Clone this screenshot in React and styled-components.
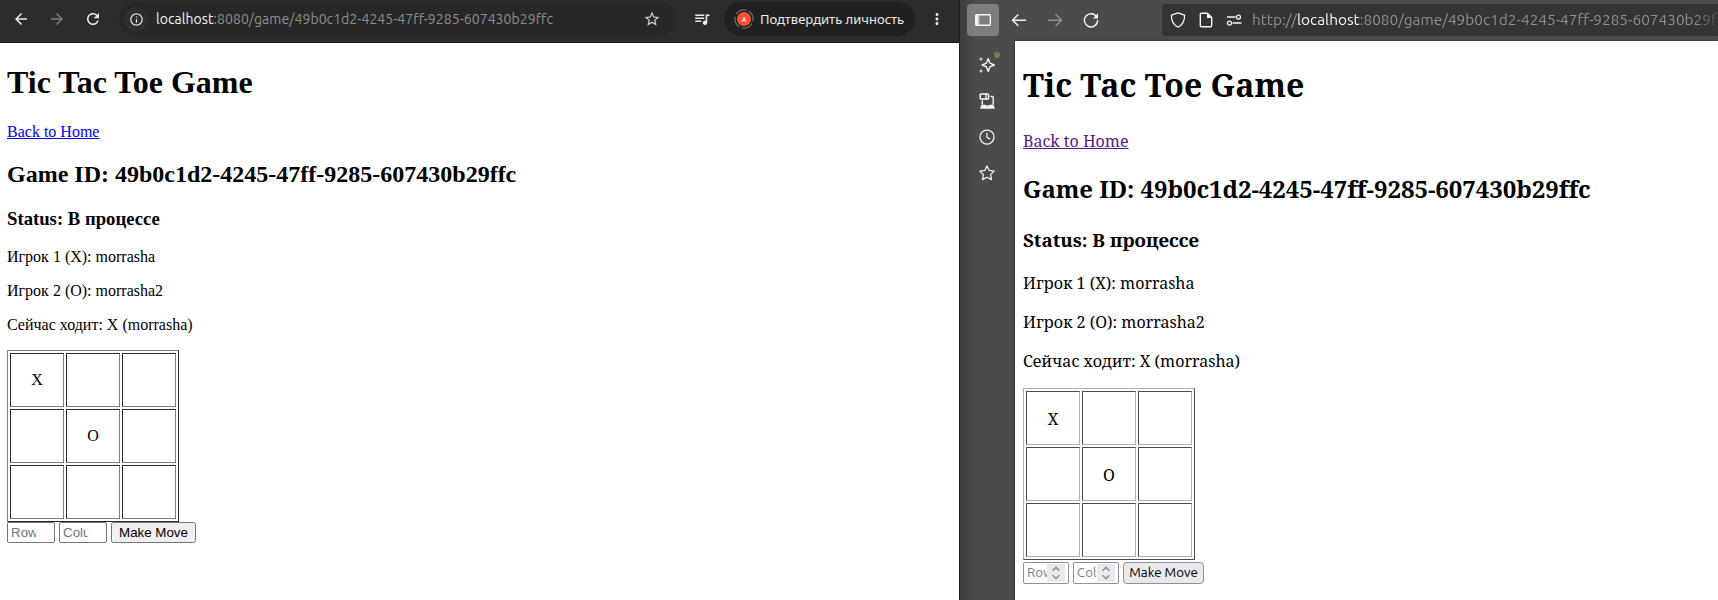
import React from 'react';
import styled, { createGlobalStyle } from 'styled-components';
import {
  MdArrowBack,
  MdArrowForward,
  MdRefresh,
  MdInfoOutline,
  MdStarBorder,
  MdQueueMusic,
  MdMoreVert,
} from 'react-icons/md';

const GAME_ID = '49b0c1d2-4245-47ff-9285-607430b29ffc';
const BOARD = [
  ['X', '', ''],
  ['', 'O', ''],
  ['', '', ''],
];
const UI_FONT = "Ubuntu, 'Noto Sans', sans-serif";

const GlobalStyle = createGlobalStyle`
  body { margin: 0; background: #fff; overflow: hidden; }
`;

const Desktop = styled.div`
  display: grid;
  grid-template-columns: 959px 759px;
  height: 600px;
  overflow: hidden;
  background: #fff;
  color: #000;
`;

/* ---------- Chromium window ---------- */

const ChromeWindow = styled.section`
  display: flex;
  flex-direction: column;
  min-width: 0;
`;

const ChromeToolbar = styled.header`
  display: flex;
  align-items: center;
  box-sizing: border-box;
  height: 43px;
  padding: 0 12px 4px 12px;
  border-bottom: 1px solid #161616;
  background: #2c2c2c;
  color: #e8e8e8;
  flex: none;
`;

const ToolIcon = styled.span`
  display: flex;
  justify-content: center;
  width: 18px;
  margin-left: ${(p) => p.$before || 0}px;
  margin-right: ${(p) => p.$gap || 0}px;
  color: ${(p) => (p.$dim ? '#7d7d7d' : '#ececec')};
  flex: none;
`;

const AddressPill = styled.div`
  display: flex;
  align-items: center;
  box-sizing: border-box;
  width: 557px;
  height: 34px;
  padding: 0 15px 0 5px;
  border-radius: 17px;
  background: #272727;
  flex: none;
`;

const InfoBadge = styled.span`
  display: grid;
  place-items: center;
  width: 24px;
  height: 24px;
  margin-right: 8px;
  border-radius: 50%;
  background: #2e2e2e;
  color: #e0e0e0;
`;

const Url = styled.span`
  flex: 1;
  font: ${(p) => p.$size}px/20px ${UI_FONT};
  letter-spacing: ${(p) => p.$spacing || 0}px;
  white-space: nowrap;
  overflow: hidden;
  color: #8f8f8f;
  ${(p) => p.$fade && 'mask-image: linear-gradient(to right, #000 calc(100% - 24px), rgba(0, 0, 0, 0.2));'}
`;

const Host = styled.span`
  color: #f4f4f4;
`;

const ProfilePill = styled.div`
  display: flex;
  align-items: center;
  box-sizing: border-box;
  width: 191px;
  height: 34px;
  margin-right: 13px;
  padding-left: 10px;
  border-radius: 17px;
  background: #202020;
  color: #e9e9e9;
  font: 13px/20px 'Noto Sans', sans-serif;
  white-space: nowrap;
  flex: none;
`;

const AvatarArt = styled.svg`
  width: 20px;
  height: 20px;
  margin-right: 6px;
`;

const ChromePage = styled.main`
  padding: 21.44px 8px 0 7px;
  font: 16px 'Liberation Serif', serif;

  h1 { margin: 0 0 21.44px; font-size: 32px; }
  h2 { margin: 19.92px 0; font-size: 24px; }
  h3 { margin: 18.72px 0; font-size: 18.72px; }
  p { margin: 16px 0; }
`;

const BackLink = styled.a`
  color: ${(p) => p.$color};
  text-decoration: underline;
  cursor: pointer;
`;

const Board = styled.table`
  border: 1px solid;
  border-color: ${(p) => `${p.$light} ${p.$dark} ${p.$dark} ${p.$light}`};
  border-spacing: 2px;
  border-collapse: separate;

  td {
    box-sizing: border-box;
    width: 54px;
    height: 54px;
    padding: 1px;
    border: 1px solid;
    border-color: ${(p) => `${p.$dark} ${p.$light} ${p.$light} ${p.$dark}`};
    text-align: center;
    vertical-align: middle;
  }
`;

const MoveForm = styled.form`
  display: flex;
  gap: 4px;
  margin-top: ${(p) => p.$top || 0}px;
`;

const NativeNumber = styled.input`
  width: 40px;
  margin: 0;
  font: 13.333px 'Liberation Sans', sans-serif;
`;

const NativeButton = styled.button`
  width: 85px;
  margin: 0;
  padding: 1px 0;
  font: 13.333px 'Liberation Sans', sans-serif;
`;

/* ---------- Firefox window ---------- */

const FoxWindow = styled.section`
  display: grid;
  grid-template: 41px 559px / 56px 703px;
  box-sizing: border-box;
  background: linear-gradient(to right, #1c1c1c 1px, #3e3e3e 1px, #4b4b4b 17px);
`;

const FoxToolbar = styled.header`
  grid-column: 1 / -1;
  display: flex;
  align-items: flex-start;
  padding: 4px 0 0 8px;
  color: #f4f4f4;
`;

const ToolButton = styled.span`
  display: grid;
  place-items: center;
  width: 32px;
  height: 32px;
  margin-right: ${(p) => p.$gap}px;
  border-radius: 4px;
  background: ${(p) => (p.$active ? '#7d7d7d' : 'transparent')};
  opacity: ${(p) => (p.$dim ? 0.42 : 1)};
  flex: none;
`;

const FoxAddress = styled.div`
  display: flex;
  align-items: center;
  box-sizing: border-box;
  width: 556px;
  height: 32px;
  margin-left: 55px;
  padding-left: 8px;
  border-radius: 4px 0 0 4px;
  background: #343434;
  flex: none;
`;

const AddressIcon = styled.span`
  display: flex;
  margin-right: ${(p) => p.$gap}px;
`;

const Rail = styled.nav`
  display: flex;
  flex-direction: column;
  align-items: center;
  gap: 20px;
  padding: 16px 0 0;
  color: #f4f4f4;
`;

const RailItem = styled.span`
  position: relative;
  display: flex;
`;

const NewDot = styled.span`
  position: absolute;
  top: -5px;
  right: -5px;
  width: 6px;
  height: 6px;
  border-radius: 50%;
  background: #7b7a58;
`;

const Glyph = styled.svg`
  display: block;
  width: 16px;
  height: 16px;
  fill: none;
  stroke: currentColor;
  stroke-width: 1.25;
  stroke-linecap: round;
  stroke-linejoin: round;
`;

const FoxPage = styled.main`
  padding: 21px 8px 0;
  background: #fff;
  box-shadow: 0 0 3px #2a2a2a;
  font: 16px/25px 'Noto Serif', 'DejaVu Serif', serif;
  clip-path: inset(-3px 0 0 -3px);

  h1 { margin: 0 0 22px; font-size: 32px; line-height: 45px; }
  h2 { margin: 17px 0 21px; font-size: 24px; line-height: 35px; letter-spacing: -0.07px; white-space: nowrap; }
  h3 { margin: 19px 0 18px; font-size: 18.72px; line-height: 26px; }
  p { margin: 14px 0; }
  td { padding-top: 3px; }
`;

const FoxNumber = styled.div`
  display: flex;
  align-items: center;
  box-sizing: border-box;
  width: 46px;
  height: 22px;
  padding: 0 3px;
  border: 1px solid #8f8f9d;
  border-radius: 2px;
  color: #808080;
  font: 13.333px/18px ${UI_FONT};
`;

const Placeholder = styled.span`
  width: 20px;
  overflow: hidden;
`;

const Spinner = styled.span`
  display: grid;
  place-items: center;
  width: 18px;
  height: 18px;
  background: #e9e9ed;
  color: #8f8f9d;
`;

const FoxButton = styled.button`
  box-sizing: border-box;
  width: 81px;
  height: 22px;
  margin: 0;
  padding: 0;
  border: 1px solid #8f8f9d;
  border-radius: 4px;
  background: #e9e9ed;
  color: #000;
  font: 13.333px/18px ${UI_FONT};
  white-space: nowrap;
`;

const Avatar = () => (
  <AvatarArt viewBox="0 0 20 20">
    <circle cx="10" cy="10" r="9" fill="none" stroke="#707070" strokeWidth="1.2" strokeDasharray="11.5 2.6" transform="rotate(-60 10 10)" />
    <circle cx="10" cy="10" r="7" fill="#fb5130" />
    <text x="10" y="12.6" textAnchor="middle" fontFamily="Noto Sans, sans-serif" fontSize="7" fill="#fff">A</text>
  </AvatarArt>
);

const SidebarGlyph = () => (
  <Glyph viewBox="0 0 16 16">
    <rect x="0.7" y="2.7" width="14.6" height="10.6" rx="1" strokeWidth="1.4" />
    <path d="M0.8 3h2.6v10H0.8z" fill="currentColor" stroke="none" />
    <path d="M4 3v10" stroke="#d0d0d0" strokeWidth="1" />
  </Glyph>
);

const BackGlyph = () => (
  <Glyph viewBox="0 0 16 16">
    <path d="M14.6 8.2H1.6M7 2.8L1.5 8.2 7 13.6" strokeWidth="1.4" />
  </Glyph>
);

const ForwardGlyph = () => (
  <Glyph viewBox="0 0 16 16">
    <path d="M1.4 8.2h13M9 2.8l5.5 5.4L9 13.6" strokeWidth="1.4" />
  </Glyph>
);

const ReloadGlyph = () => (
  <Glyph viewBox="0 0 16 16">
    <path d="M13.7 5A6.6 6.6 0 1 0 14.6 8.6" strokeWidth="1.4" />
    <path d="M15 1.3v5.2H9.8z" fill="currentColor" stroke="none" />
  </Glyph>
);

const ShieldGlyph = () => (
  <Glyph viewBox="0 0 16 16">
    <path d="M8 0.8L14.6 3.2c.2 5-1.2 9-6.6 12C2.6 12.2 1.2 8.2 1.4 3.2z" />
  </Glyph>
);

const PageGlyph = () => (
  <Glyph viewBox="0 0 16 16">
    <path d="M9.5 1.2H3.5a1.2 1.2 0 0 0-1.2 1.2v11.2a1.2 1.2 0 0 0 1.2 1.2h9a1.2 1.2 0 0 0 1.2-1.2V5.4z" strokeWidth="1.4" />
    <path d="M9 1v5h5z" fill="currentColor" stroke="none" />
  </Glyph>
);

const PermissionsGlyph = () => (
  <Glyph viewBox="0 0 16 16">
    <path d="M1.5 5h7.5M7 11h8" strokeWidth="1.5" />
    <circle cx="12.5" cy="5" r="2" />
    <circle cx="3.5" cy="11" r="2" />
  </Glyph>
);

const SparkleGlyph = () => (
  <Glyph viewBox="0 0 16 16">
    <path d="M9.2 1.6l1.7 4.5 4.4 1.9-4.4 1.9-1.7 4.5-1.7-4.5L3.1 8l4.4-1.9z" strokeWidth="1.4" />
    <circle cx="2" cy="2" r="1.5" fill="#c9c9c9" stroke="none" />
    <circle cx="2" cy="14" r="1.5" fill="#c9c9c9" stroke="none" />
  </Glyph>
);

const DevicesGlyph = () => (
  <Glyph viewBox="0 0 16 16">
    <rect x="1.2" y="1" width="8.3" height="5" rx="0.8" strokeWidth="1.5" />
    <path d="M7 1v5" strokeWidth="1.3" />
    <path d="M3.3 8v3.2M12 3.5h1.2a1 1 0 0 1 1 1v6.7" strokeWidth="1.4" />
    <path d="M2.8 11.7h3.7c.2 1 3.7 1 3.9 0h3.8l1.6 2.7a1 1 0 0 1-.9 1.3H2.1a1 1 0 0 1-.9-1.3z" fill="currentColor" stroke="none" />
  </Glyph>
);

const ClockGlyph = () => (
  <Glyph viewBox="0 0 16 16">
    <circle cx="8" cy="8" r="7" />
    <path d="M7.9 4v4.3l2.8 1.6" />
  </Glyph>
);

const StarGlyph = () => (
  <Glyph viewBox="0 0 16 16">
    <path d="M8 0.9l2.2 4.5 5 .7-3.6 3.5.9 5L8 12.3l-4.5 2.3.9-5L.8 6.1l5-.7z" />
  </Glyph>
);

const SpinArrows = () => (
  <svg width="10" height="14" viewBox="0 0 10 14" fill="none" stroke="currentColor" strokeWidth="1.5">
    <path d="M1.5 4.7L5 1.4l3.5 3.3M1.5 9.3L5 12.6l3.5-3.3" />
  </svg>
);

const GameBoard = ({ light, dark }) => (
  <Board $light={light} $dark={dark}>
    <tbody>
      {BOARD.map((row, r) => (
        <tr key={r}>
          {row.map((mark, c) => (
            <td key={c}>{mark}</td>
          ))}
        </tr>
      ))}
    </tbody>
  </Board>
);

const GameInfo = ({ linkColor }) => (
  <>
    <h1>Tic Tac Toe Game</h1>
    <BackLink $color={linkColor}>Back to Home</BackLink>
    <h2>Game ID: {GAME_ID}</h2>
    <h3>Status: В процессе</h3>
    <p>Игрок 1 (X): morrasha</p>
    <p>Игрок 2 (O): morrasha2</p>
    <p>Сейчас ходит: X (morrasha)</p>
  </>
);

export default function App() {
  return (
    <>
      <GlobalStyle />
      <Desktop>
        <ChromeWindow>
          <ChromeToolbar>
            <ToolIcon $gap={18}><MdArrowBack size={18} /></ToolIcon>
            <ToolIcon $gap={18} $dim><MdArrowForward size={18} /></ToolIcon>
            <ToolIcon $gap={17}><MdRefresh size={18} /></ToolIcon>
            <AddressPill>
              <InfoBadge><MdInfoOutline size={15} /></InfoBadge>
              <Url $size={14} $spacing={0.06}><Host>localhost</Host>:8080/game/{GAME_ID}</Url>
              <MdStarBorder size={18} color="#d0d0d0" />
            </AddressPill>
            <ToolIcon $before={17} $gap={13}><MdQueueMusic size={20} /></ToolIcon>
            <ProfilePill><Avatar />Подтвердить личность</ProfilePill>
            <ToolIcon><MdMoreVert size={20} /></ToolIcon>
          </ChromeToolbar>
          <ChromePage>
            <GameInfo linkColor="#0000ee" />
            <GameBoard light="#808080" dark="#2b2b2b" />
            <MoveForm>
              <NativeNumber type="number" placeholder="Row" />
              <NativeNumber type="number" placeholder="Column" />
              <NativeButton type="button">Make Move</NativeButton>
            </MoveForm>
          </ChromePage>
        </ChromeWindow>

        <FoxWindow>
          <FoxToolbar>
            <ToolButton $gap={4} $active><SidebarGlyph /></ToolButton>
            <ToolButton $gap={4}><BackGlyph /></ToolButton>
            <ToolButton $gap={4} $dim><ForwardGlyph /></ToolButton>
            <ToolButton $gap={0}><ReloadGlyph /></ToolButton>
            <FoxAddress>
              <AddressIcon $gap={12}><ShieldGlyph /></AddressIcon>
              <AddressIcon $gap={12}><PageGlyph /></AddressIcon>
              <AddressIcon $gap={10}><PermissionsGlyph /></AddressIcon>
              <Url $size={15.4} $fade>http://<Host>localhost</Host>:8080/game/{GAME_ID}</Url>
            </FoxAddress>
          </FoxToolbar>
          <Rail>
            <RailItem><SparkleGlyph /><NewDot /></RailItem>
            <RailItem><DevicesGlyph /></RailItem>
            <RailItem><ClockGlyph /></RailItem>
            <RailItem><StarGlyph /></RailItem>
          </Rail>
          <FoxPage>
            <GameInfo linkColor="#551a8b" />
            <GameBoard light="#b0b0b0" dark="#4c4c4c" />
            <MoveForm $top={2}>
              <FoxNumber><Placeholder>Row</Placeholder><Spinner><SpinArrows /></Spinner></FoxNumber>
              <FoxNumber><Placeholder>Column</Placeholder><Spinner><SpinArrows /></Spinner></FoxNumber>
              <FoxButton type="button">Make Move</FoxButton>
            </MoveForm>
          </FoxPage>
        </FoxWindow>
      </Desktop>
    </>
  );
}
